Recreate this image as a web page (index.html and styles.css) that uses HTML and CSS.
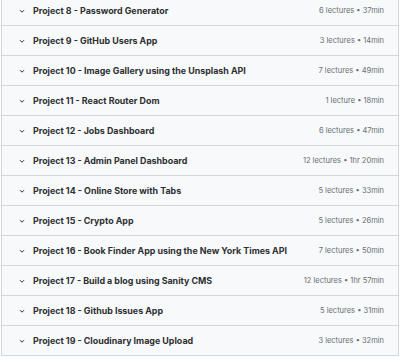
FILE: index.html
```html
<!DOCTYPE html>
<html lang="en">
<head>
  <meta charset="UTF-8" />
  <meta name="viewport" content="width=device-width, initial-scale=1.0"/>
  <title>Course content</title>
  <link rel="stylesheet" href="styles.css">
</head>
<body>

  <div class="curriculum">
    <div class="section">
      <span class="chevron"><svg viewBox="0 0 10 10"><path d="M3 4.2 L5 6.2 L7 4.2"/></svg></span>
      <span class="title">Project 8 - Password Generator</span>
      <span class="meta">6 lectures • 37min</span>
    </div>
    <div class="section">
      <span class="chevron"><svg viewBox="0 0 10 10"><path d="M3 4.2 L5 6.2 L7 4.2"/></svg></span>
      <span class="title">Project 9 - GitHub Users App</span>
      <span class="meta">3 lectures • 14min</span>
    </div>
    <div class="section">
      <span class="chevron"><svg viewBox="0 0 10 10"><path d="M3 4.2 L5 6.2 L7 4.2"/></svg></span>
      <span class="title">Project 10 - Image Gallery using the Unsplash API</span>
      <span class="meta">7 lectures • 49min</span>
    </div>
    <div class="section">
      <span class="chevron"><svg viewBox="0 0 10 10"><path d="M3 4.2 L5 6.2 L7 4.2"/></svg></span>
      <span class="title">Project 11 - React Router Dom</span>
      <span class="meta">1 lecture • 18min</span>
    </div>
    <div class="section">
      <span class="chevron"><svg viewBox="0 0 10 10"><path d="M3 4.2 L5 6.2 L7 4.2"/></svg></span>
      <span class="title">Project 12 - Jobs Dashboard</span>
      <span class="meta">6 lectures • 47min</span>
    </div>
    <div class="section">
      <span class="chevron"><svg viewBox="0 0 10 10"><path d="M3 4.2 L5 6.2 L7 4.2"/></svg></span>
      <span class="title">Project 13 - Admin Panel Dashboard</span>
      <span class="meta">12 lectures • 1hr 20min</span>
    </div>
    <div class="section">
      <span class="chevron"><svg viewBox="0 0 10 10"><path d="M3 4.2 L5 6.2 L7 4.2"/></svg></span>
      <span class="title">Project 14 - Online Store with Tabs</span>
      <span class="meta">5 lectures • 33min</span>
    </div>
    <div class="section">
      <span class="chevron"><svg viewBox="0 0 10 10"><path d="M3 4.2 L5 6.2 L7 4.2"/></svg></span>
      <span class="title">Project 15 - Crypto App</span>
      <span class="meta">5 lectures • 26min</span>
    </div>
    <div class="section">
      <span class="chevron"><svg viewBox="0 0 10 10"><path d="M3 4.2 L5 6.2 L7 4.2"/></svg></span>
      <span class="title">Project 16 - Book Finder App using the New York Times API</span>
      <span class="meta">7 lectures • 50min</span>
    </div>
    <div class="section">
      <span class="chevron"><svg viewBox="0 0 10 10"><path d="M3 4.2 L5 6.2 L7 4.2"/></svg></span>
      <span class="title">Project 17 - Build a blog using Sanity CMS</span>
      <span class="meta">12 lectures • 1hr 57min</span>
    </div>
    <div class="section">
      <span class="chevron"><svg viewBox="0 0 10 10"><path d="M3 4.2 L5 6.2 L7 4.2"/></svg></span>
      <span class="title">Project 18 - Github Issues App</span>
      <span class="meta">5 lectures • 31min</span>
    </div>
    <div class="section">
      <span class="chevron"><svg viewBox="0 0 10 10"><path d="M3 4.2 L5 6.2 L7 4.2"/></svg></span>
      <span class="title">Project 19 - Cloudinary Image Upload</span>
      <span class="meta">3 lectures • 32min</span>
    </div>
  </div>

</body>
</html>
```

FILE: styles.css
```css
body {
  margin: 0;
  background: #ffffff;
  color: #2d2f31;
  font-family: Inter, 'Noto Sans', sans-serif;
}
.curriculum {
  margin: -5px 1px 0 1px;
  border-left: 1px solid #d1d7dc;
  border-right: 1px solid #d1d7dc;
  border-bottom: 1px solid #d1d7dc;
}
.section {
  display: flex;
  align-items: center;
  height: 29px;
  border-top: 1px solid #d1d7dc;
  background: #f7f9fa;
  padding: 0 14px 0 15px;
}
.section:first-child {
  border-top-color: transparent;
}
.chevron {
  width: 10px;
  height: 10px;
  margin-right: 6px;
  flex-shrink: 0;
}
.chevron svg {
  display: block;
  width: 10px;
  height: 10px;
  fill: none;
  stroke: #2d2f31;
  stroke-width: 1;
}
.title {
  flex: 1;
  font-size: 8.9px;
  font-weight: 700;
  white-space: nowrap;
}
.meta {
  font-size: 7.5px;
  color: #6a6f73;
  white-space: nowrap;
}
```
